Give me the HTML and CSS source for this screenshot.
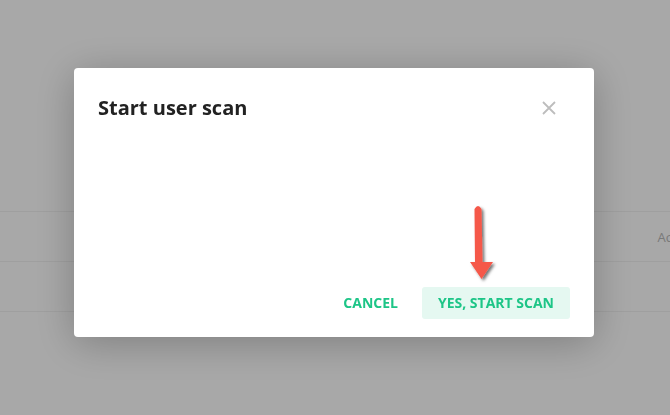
FILE: index.html
```html
<!DOCTYPE html>
<html lang="en">
<head>
  <meta charset="UTF-8">
  <meta name="viewport" content="width=device-width, initial-scale=1.0">
  <title>Start user scan</title>
  <link rel="stylesheet" href="styles.css">
</head>
<body>
  <!-- page behind the dialog -->
  <div class="page">
    <div class="row row-top"></div>
    <div class="row"><span class="cell-end">Ac</span></div>
    <div class="row"></div>
  </div>

  <!-- dialog -->
  <div class="overlay">
    <div class="modal">
      <div class="modal-head">
        <h2>Start user scan</h2>
        <button class="close-btn" aria-label="Close">
          <svg width="14" height="14" viewBox="0 0 14 14">
            <path d="M1 1 L13 13 M13 1 L1 13" stroke="#bdbdbd" stroke-width="1.8" fill="none"/>
          </svg>
        </button>
      </div>
      <div class="modal-body"></div>
      <div class="modal-foot">
        <button class="btn btn-text">CANCEL</button>
        <button class="btn btn-primary">YES, START SCAN</button>
      </div>
    </div>

    <!-- annotation arrow -->
    <svg class="arrow" width="40" height="90" viewBox="0 0 40 90">
      <defs>
        <filter id="sh" x="-50%" y="-50%" width="200%" height="200%">
          <feDropShadow dx="2" dy="2" stdDeviation="1.5" flood-color="#000" flood-opacity="0.55"/>
        </filter>
      </defs>
      <g filter="url(#sh)">
        <path d="M14.5 9 Q18 3 21.5 9 L22.5 62 L33 62 L21.5 79 L10 62 L15 62 Z" fill="#f5584a"/>
      </g>
    </svg>
  </div>
</body>
</html>
```

FILE: styles.css
```css
body {
  margin: 0;
  font-family: "Open Sans", "Liberation Sans", sans-serif;
  background: #fff;
  height: 415px;
  overflow: hidden;
}
.page {
  padding-top: 162px;
}
.row {
  height: 49px;
  border-bottom: 1px solid #f2f2f2;
  display: flex;
  align-items: center;
  justify-content: flex-end;
}
.row-top {
  border-bottom: 1px solid #f2f2f2;
}
.cell-end {
  font-size: 13px;
  color: #b8b8b8;
  margin-right: -2px;
}
.overlay {
  position: fixed;
  inset: 0;
  background: rgba(0, 0, 0, 0.34);
  display: flex;
  justify-content: center;
  align-items: flex-start;
  padding-top: 68px;
}
.modal {
  width: 520px;
  height: 269px;
  margin-left: -2px;
  background: #fff;
  border-radius: 4px;
  box-shadow: 0 6px 40px rgba(0, 0, 0, 0.25);
  display: flex;
  flex-direction: column;
}
.modal-head {
  display: flex;
  justify-content: space-between;
  align-items: center;
  padding: 26px 38px 0 24px;
}
.modal-head h2 {
  margin: 0;
  font-size: 20px;
  font-weight: 700;
  color: #222;
  line-height: 28px;
}
.close-btn {
  background: none;
  border: 0;
  padding: 0;
  width: 14px;
  height: 14px;
  display: flex;
}
.modal-body {
  flex: 1;
}
.modal-foot {
  display: flex;
  justify-content: flex-end;
  gap: 8px;
  padding: 0 24px 18px;
}
.btn {
  font-family: inherit;
  font-size: 14px;
  font-weight: 700;
  color: #1dc587;
  border: 0;
  border-radius: 3px;
  height: 32px;
  padding: 0 16px 1px;
  background: none;
}
.btn-primary {
  background: #e5f8f1;
}
.arrow {
  position: absolute;
  left: 460px;
  top: 200px;
}
```
